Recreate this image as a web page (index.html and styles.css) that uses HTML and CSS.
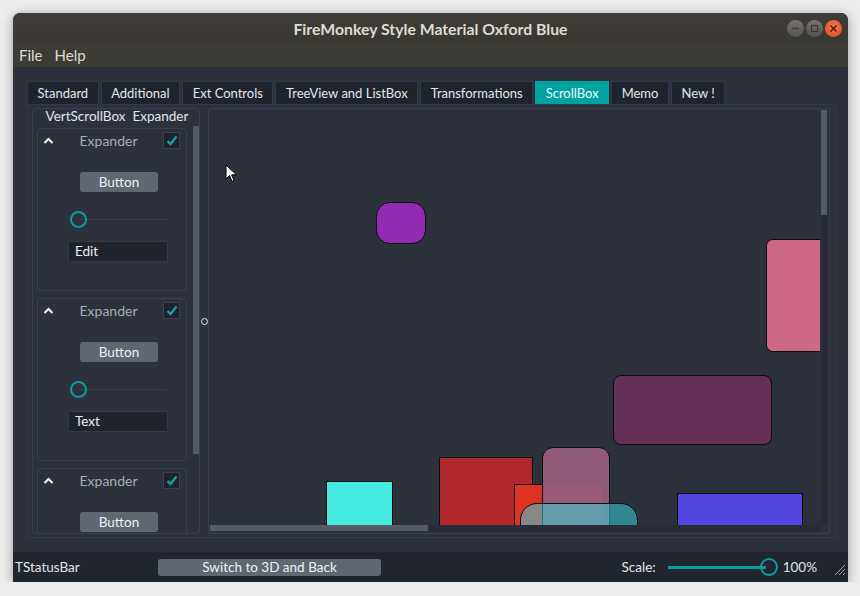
FILE: index.html
```html
<!DOCTYPE html>
<html lang="en">
<head>
    <meta charset="UTF-8">
    <title>FireMonkey Style Material Oxford Blue</title>
    <link rel="stylesheet" href="styles.css">
</head>
<body>

    <div class="window">

        <!-- Title bar -->
        <div class="titlebar">
            <span class="title">FireMonkey Style Material Oxford Blue</span>
            <div class="wm-buttons">
                <span class="wm-btn">
                    <svg width="17" height="17" viewBox="0 0 17 17"><line x1="5" y1="8.5" x2="12" y2="8.5" stroke="#3a3935" stroke-width="1.5"/></svg>
                </span>
                <span class="wm-btn">
                    <svg width="17" height="17" viewBox="0 0 17 17"><rect x="5.5" y="5.5" width="6" height="6" fill="none" stroke="#3a3935" stroke-width="1.2"/></svg>
                </span>
                <span class="wm-btn close">
                    <svg width="17" height="17" viewBox="0 0 17 17"><path d="M5.5 5.5 L11.5 11.5 M11.5 5.5 L5.5 11.5" stroke="#4a1a08" stroke-width="1.4"/></svg>
                </span>
            </div>
        </div>

        <!-- Menu -->
        <div class="menubar">
            <span>File</span>
            <span>Help</span>
        </div>

        <div class="client">
            <div class="tabs">
                <div class="tab">Standard</div>
                <div class="tab">Additional</div>
                <div class="tab">Ext Controls</div>
                <div class="tab">TreeView and ListBox</div>
                <div class="tab">Transformations</div>
                <div class="tab active">ScrollBox</div>
                <div class="tab">Memo</div>
                <div class="tab">New !</div>
            </div>

            <div class="tab-panel">

                <!-- Left: vertical scroll box with expanders -->
                <div class="group">
                    <div class="group-title">VertScrollBox&nbsp; Expander</div>
                    <div class="vscroll">
                        <div class="expanders">
                            <div class="expander">
                                <div class="exp-head">
                                    <svg class="chevron" width="11" height="7" viewBox="0 0 11 7"><path d="M1.5 6 L5.5 2 L9.5 6" fill="none" stroke="#f0f2f5" stroke-width="2"/></svg>
                                    <span class="exp-title">Expander</span>
                                    <span class="check">
                                        <svg width="12" height="11" viewBox="0 0 12 11"><path d="M1.5 6 L4.5 9 L10.5 1.5" fill="none" stroke="#10a5a8" stroke-width="2.2"/></svg>
                                    </span>
                                </div>
                                <div class="exp-body">
                                    <div class="btn">Button</div>
                                    <div class="slider"><span class="knob"></span></div>
                                    <div class="edit">Edit</div>
                                </div>
                            </div>
                            <div class="expander">
                                <div class="exp-head">
                                    <svg class="chevron" width="11" height="7" viewBox="0 0 11 7"><path d="M1.5 6 L5.5 2 L9.5 6" fill="none" stroke="#f0f2f5" stroke-width="2"/></svg>
                                    <span class="exp-title">Expander</span>
                                    <span class="check">
                                        <svg width="12" height="11" viewBox="0 0 12 11"><path d="M1.5 6 L4.5 9 L10.5 1.5" fill="none" stroke="#10a5a8" stroke-width="2.2"/></svg>
                                    </span>
                                </div>
                                <div class="exp-body">
                                    <div class="btn">Button</div>
                                    <div class="slider"><span class="knob"></span></div>
                                    <div class="edit">Text</div>
                                </div>
                            </div>
                            <!-- only the top of the third one is in view -->
                            <div class="expander">
                                <div class="exp-head">
                                    <svg class="chevron" width="11" height="7" viewBox="0 0 11 7"><path d="M1.5 6 L5.5 2 L9.5 6" fill="none" stroke="#f0f2f5" stroke-width="2"/></svg>
                                    <span class="exp-title">Expander</span>
                                    <span class="check">
                                        <svg width="12" height="11" viewBox="0 0 12 11"><path d="M1.5 6 L4.5 9 L10.5 1.5" fill="none" stroke="#10a5a8" stroke-width="2.2"/></svg>
                                    </span>
                                </div>
                                <div class="exp-body">
                                    <div class="btn">Button</div>
                                </div>
                            </div>
                        </div>
                        <div class="vbar"><div class="vthumb"></div></div>
                    </div>
                </div>

                <div class="splitter"><span class="grip-dot"></span></div>

                <!-- Right: free scroll box with shapes -->
                <div class="scrollbox">
                    <div class="sb-row">
                        <div class="canvas">
                            <div class="shape purple"></div>
                            <div class="shape pink"></div>
                            <div class="shape maroon"></div>
                            <div class="shape cyan"></div>
                            <div class="shape red"></div>
                            <div class="shape orange"></div>
                            <div class="shape mauve"></div>
                            <div class="shape teal"></div>
                            <div class="shape blue"></div>
                            <svg class="cursor" width="13" height="19" viewBox="0 0 13 19">
                                <path d="M1 1 L1 15 L4.5 11.5 L7 17.5 L9 16.5 L6.6 10.8 L11.5 10.8 Z" fill="#ffffff" stroke="#000" stroke-width="1"/>
                            </svg>
                        </div>
                        <div class="sb-vbar"><div class="sb-vthumb"></div></div>
                    </div>
                    <div class="sb-hbar"><div class="sb-hthumb"></div></div>
                </div>

            </div>
        </div>

        <!-- Status bar -->
        <div class="statusbar">
            <span class="status-text">TStatusBar</span>
            <div class="status-btn">Switch to 3D and Back</div>
            <span class="scale-label">Scale:</span>
            <div class="scale-slider"><span class="scale-knob"></span></div>
            <span class="scale-value">100%</span>
            <svg class="size-grip" width="14" height="14" viewBox="0 0 14 14">
                <path d="M3 13 L13 3 M7 13 L13 7 M11 13 L13 11" stroke="#9aa0aa" stroke-width="1"/>
            </svg>
        </div>

    </div>

</body>
</html>
```

FILE: styles.css
```css
body {
    margin: 0;
    background-color: #ededed;
    font-family: Lato, "Open Sans", sans-serif;
    font-size: 13.5px;
    color: #e2e6ec;
}

.window {
    margin: 13px 0 0 13px;
    width: 835px;
    height: 569px;
    display: flex;
    flex-direction: column;
    border-radius: 7px 7px 0 0;
    overflow: hidden;
    box-shadow: 0 2px 12px rgba(0, 0, 0, 0.35);
    background-color: #2c313c;
}

/* title bar */
.titlebar {
    height: 30px;
    flex-shrink: 0;
    display: flex;
    align-items: center;
    justify-content: center;
    position: relative;
    background: linear-gradient(#403d38, #393732);
}

.title {
    font-weight: bold;
    font-size: 15.8px;
    color: #dfdbd2;
}

.wm-buttons {
    position: absolute;
    right: 6px;
    top: 7px;
    display: flex;
    gap: 2px;
}

.wm-btn {
    width: 17px;
    height: 17px;
    border-radius: 50%;
    background: linear-gradient(#77746e, #55534e);
    display: block;
}

.wm-btn svg {
    display: block;
}

.wm-btn.close {
    background: radial-gradient(circle at 50% 40%, #f57a4c, #d8481d);
}

.menubar {
    height: 24px;
    flex-shrink: 0;
    background-color: #3d3b36;
    display: flex;
    align-items: center;
    gap: 12px;
    padding-left: 6px;
    font-size: 15px;
    color: #dfdbd2;
}

/* client area */
.client {
    flex: 1;
    display: flex;
    flex-direction: column;
    padding: 14px 12px 14px 14px;
    min-height: 0;
}

.tabs {
    display: flex;
    gap: 2px;
    height: 23px;
    flex-shrink: 0;
}

.tab {
    background-color: #1f232c;
    border: 1px solid #313746;
    border-bottom: none;
    padding: 0 9.5px;
    display: flex;
    align-items: center;
    font-size: 13px;
    color: #e2e6ec;
}

.tab.active {
    background-color: #00a2a2;
    border-color: #00a2a2;
    color: #eafcfc;
}

.tab-panel {
    flex: 1;
    border: 1px solid #343a4a;
    display: flex;
    padding: 3px 5px 3px 4px;
    min-height: 0;
}

/* left group */
.group {
    width: 166px;
    border: 1px solid #3a4050;
    border-radius: 4px;
    display: flex;
    flex-direction: column;
    overflow: hidden;
}

.group-title {
    height: 15px;
    line-height: 15px;
    text-align: center;
    padding-left: 2px;
    color: #e2e6ec;
}

.vscroll {
    flex: 1;
    display: flex;
    min-height: 0;
    padding-top: 2px;
}

.expanders {
    width: 150px;
    padding: 2px 0 0 4px;
    display: flex;
    flex-direction: column;
    gap: 7px;
    overflow: hidden;
}

.expander {
    flex-shrink: 0;
    height: 161px;
    border: 1px solid #3a4050;
    border-radius: 4px;
}

.exp-head {
    height: 22px;
    display: flex;
    align-items: center;
    padding: 0 6px 0 5px;
}

.chevron {
    display: block;
}

.exp-title {
    flex: 1;
    text-align: center;
    color: #a6abb4;
    font-size: 14px;
}

.check {
    width: 15px;
    height: 15px;
    background-color: #1f232c;
    border: 1px solid #3b4150;
    display: flex;
    align-items: center;
    justify-content: center;
}

.exp-body {
    display: flex;
    flex-direction: column;
    align-items: flex-start;
    padding-top: 21px;
}

.btn {
    margin-left: 42px;
    width: 78px;
    height: 20px;
    line-height: 20px;
    text-align: center;
    background-color: #5f6770;
    border-radius: 3px;
    color: #eef1f4;
}

.slider {
    margin: 19px 0 0 32px;
    width: 96px;
    height: 17px;
    display: flex;
    align-items: center;
    background: linear-gradient(#3a404c, #3a404c) no-repeat 10px 8px / 86px 1px;
}

.knob {
    width: 13px;
    height: 13px;
    border: 2px solid #0a9ea3;
    border-radius: 50%;
}

.edit {
    margin: 13px 0 0 30px;
    width: 92px;
    height: 19px;
    line-height: 19px;
    padding-left: 6px;
    background-color: #1f232c;
    border: 1px solid #343a46;
    border-radius: 2px;
    color: #eef1f4;
}

.vbar {
    width: 6px;
    margin: 0 0 0 6px;
}

.vthumb {
    height: 328px;
    background-color: #535a65;
}

.splitter {
    width: 8px;
    display: flex;
    align-items: center;
    justify-content: center;
}

.grip-dot {
    width: 5px;
    height: 5px;
    border: 1px solid #e6e8ec;
    border-radius: 50%;
}

/* right scroll box */
.scrollbox {
    flex: 1;
    border: 1px solid #3a4050;
    border-radius: 2px;
    display: flex;
    flex-direction: column;
    padding: 1px 2px 2px 1px;
}

.sb-row {
    flex: 1;
    display: flex;
    min-height: 0;
}

.canvas {
    flex: 1;
    position: relative;
    overflow: hidden;
}

.sb-vbar {
    width: 6px;
    margin-left: 1px;
    background-color: #272c36;
}

.sb-vthumb {
    height: 105px;
    background-color: #555c67;
}

.sb-hbar {
    height: 6px;
    margin-right: 7px;
    background-color: #272c36;
}

.sb-hthumb {
    width: 218px;
    height: 6px;
    background-color: #555c67;
}

.shape {
    position: absolute;
    box-sizing: border-box;
    border: 1px solid #0b0b10;
}

.purple { left: 166px; top: 92px; width: 50px; height: 42px; border-radius: 14px; background-color: #922ab2; }
.pink { left: 556px; top: 129px; width: 70px; height: 113px; border-radius: 7px; background-color: #cd6886; }
.maroon { left: 403px; top: 265px; width: 159px; height: 70px; border-radius: 8px; background-color: #643058; }
.cyan { left: 116px; top: 371px; width: 67px; height: 60px; background-color: #45ebe0; }
.red { left: 229px; top: 347px; width: 94px; height: 80px; background-color: #b0282c; }
.orange { left: 304px; top: 374px; width: 90px; height: 60px; background-color: #dd3322; }
.mauve { left: 332px; top: 337px; width: 68px; height: 100px; border-radius: 11px; background-color: rgba(150, 94, 124, 0.95); }
.teal { left: 310px; top: 393px; width: 118px; height: 50px; border-radius: 17px; background-color: rgba(52, 220, 230, 0.5); }
.blue { left: 467px; top: 383px; width: 126px; height: 50px; background-color: #5346e0; }

.cursor {
    position: absolute;
    left: 15px;
    top: 54px;
}

/* status bar */
.statusbar {
    height: 30px;
    flex-shrink: 0;
    background-color: #21252e;
    display: flex;
    align-items: center;
    color: #e2e6ec;
}

.status-text {
    margin-left: 2px;
    width: 143px;
}

.status-btn {
    width: 223px;
    height: 17px;
    line-height: 17px;
    text-align: center;
    background-color: #5f6770;
    border-radius: 3px;
    color: #eef1f4;
}

.scale-label {
    margin-left: auto;
    margin-right: 12px;
}

.scale-slider {
    width: 110px;
    height: 18px;
    display: flex;
    align-items: center;
    justify-content: flex-end;
    background: linear-gradient(#0a9ea3, #0a9ea3) no-repeat 0 8px / 98px 3px;
}

.scale-knob {
    width: 14px;
    height: 14px;
    border: 2px solid #0a9ea3;
    border-radius: 50%;
}

.scale-value {
    margin-left: 5px;
}

.size-grip {
    margin: 4px 2px 0 15px;
}
```
